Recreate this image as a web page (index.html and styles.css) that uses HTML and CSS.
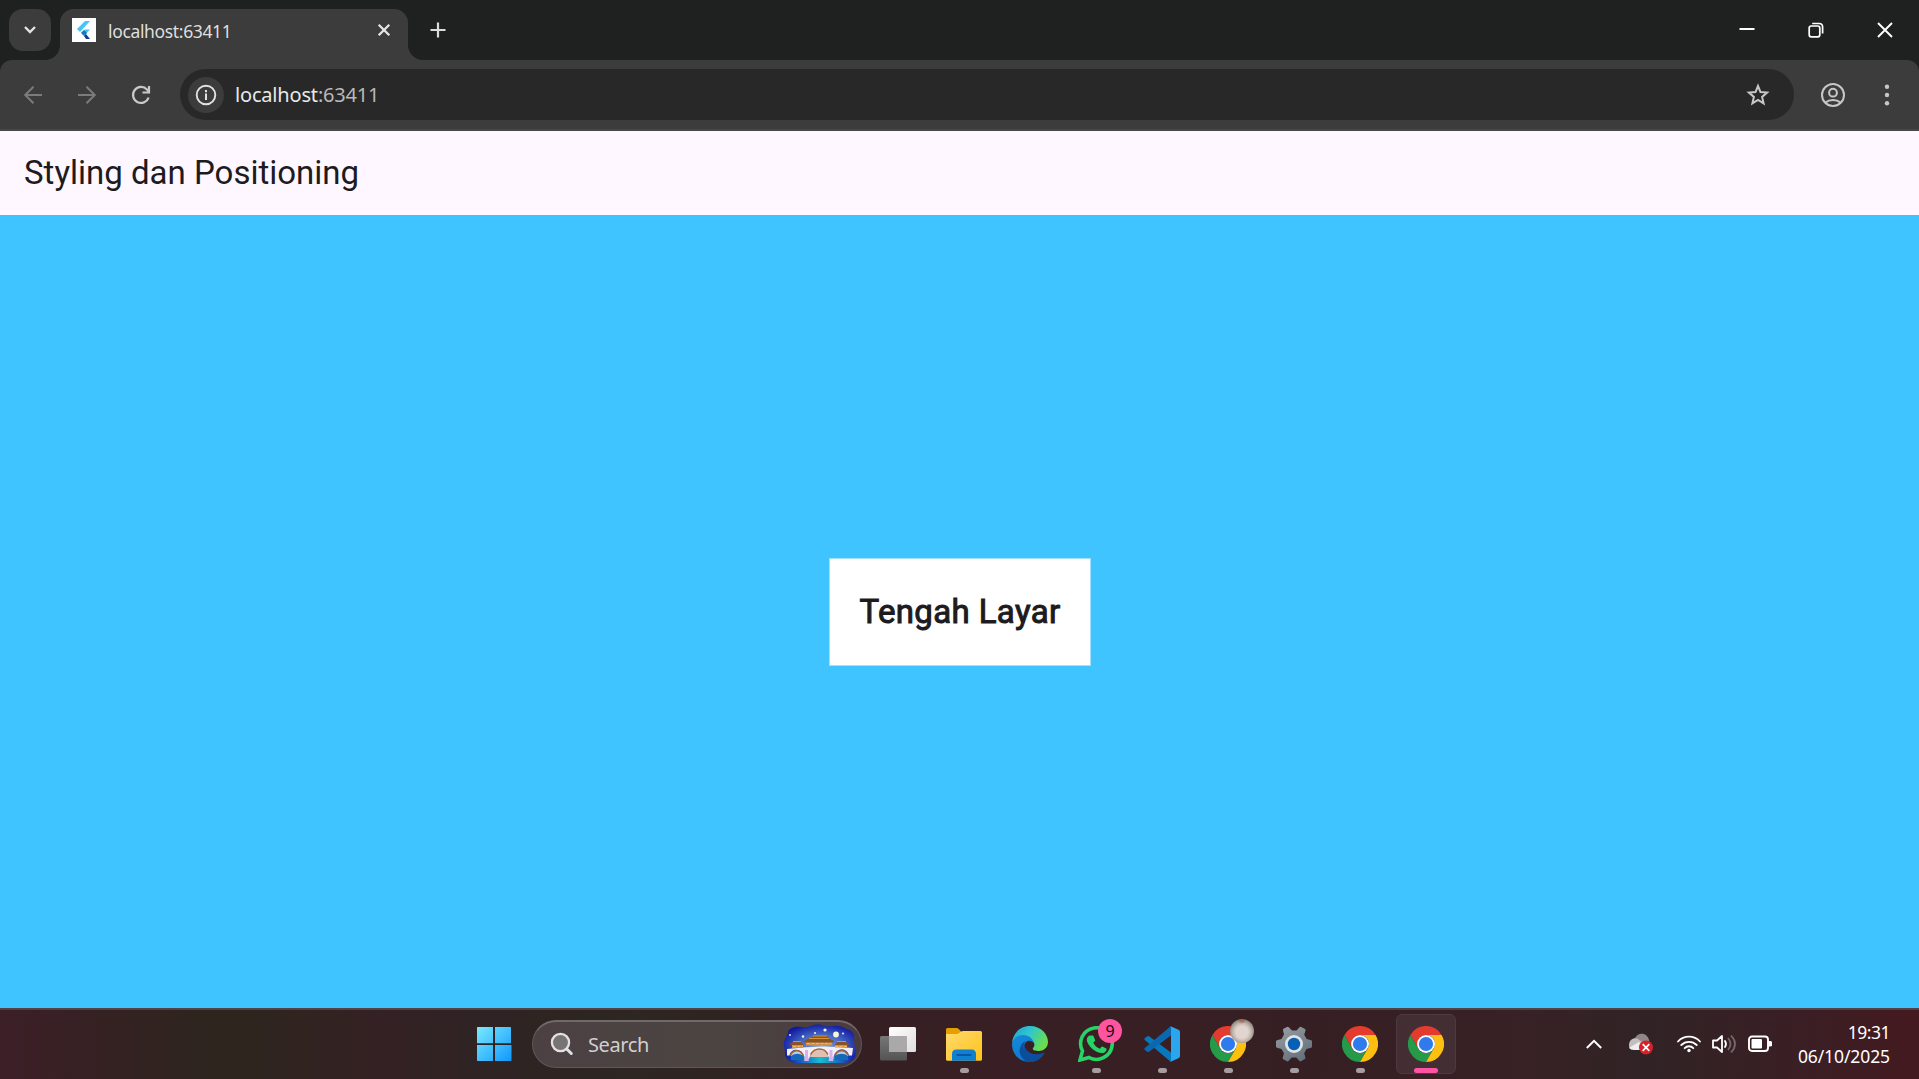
FILE: index.html
```html
<!DOCTYPE html>
<html lang="id">
<head>
<meta charset="utf-8">
<title>localhost:63411</title>
<link rel="stylesheet" href="styles.css">
</head>
<body>
<svg class="defs" width="0" height="0" aria-hidden="true">
  <symbol id="chrome" viewBox="0 0 36 36">
    <path fill="#e33b2e" d="M18 9H33.6A18 18 0 0 0 2.4 9L10.2 22.5A9 9 0 0 1 18 9z"/>
    <path fill="#259a49" d="M2.4 9A18 18 0 0 0 18 36L25.8 22.5A9 9 0 0 1 10.2 22.5z"/>
    <path fill="#fdc010" d="M33.6 9A18 18 0 0 1 18 36L25.8 22.5A9 9 0 0 0 18 9z"/>
    <circle cx="18" cy="18" r="9" fill="#fff"/><circle cx="18" cy="18" r="7.1" fill="#2f7bee"/>
  </symbol>
</svg>

<header class="tabstrip">
  <button class="tab-search"><svg width="14" height="10" viewBox="0 0 14 10"><path d="M2 2l5 5 5-5" fill="none" stroke="#e3e3e3" stroke-width="2.4"/></svg></button>
  <div class="tab">
    <svg class="favicon" width="24" height="24" viewBox="0 0 24 24"><path fill="#fff" d="M0 0h24v24H0z"/><path fill="#43c5f5" d="M13 3h5L8 14l-3-3z"/><path fill="#43c5f5" d="M13 11.500h5L13 17l-4-2.500z"/><path fill="#1c76c8" d="M9 15l3-3 3 3-3 3z"/><path fill="#113d91" d="M12 18l2-2 4 5h-4z"/></svg>
    <span class="tab-title">localhost:63411</span>
    <svg class="tab-close" width="14" height="14" viewBox="0 0 14 14"><path d="M1.700 1.700l10.600 10.600M12.300 1.700L1.700 12.300" stroke="#e6e6e6" stroke-width="2.300"/></svg>
  </div>
  <svg class="new-tab" width="16" height="16" viewBox="0 0 16 16"><path d="M8 .5v15M.5 8h15" stroke="#dcdcdc" stroke-width="2.200"/></svg>
  <div class="window-controls">
    <span><svg width="16" height="16" viewBox="0 0 16 16"><path d="M.5 7h15" stroke="#fff" stroke-width="2"/></svg></span>
    <span><svg width="16" height="16" viewBox="0 0 16 16" fill="none" stroke="#fff" stroke-width="1.700"><rect x="1.200" y="4" width="10.600" height="10.800" rx="2"/><path d="M4.200 1.500h7a3.500 3.500 0 0 1 3.400 3.500v6.500"/></svg></span>
    <span><svg width="16" height="16" viewBox="0 0 16 16"><path d="M1 1l14 14M15 1L1 15" stroke="#fff" stroke-width="1.900"/></svg></span>
  </div>
</header>

<nav class="toolbar">
  <div class="nav-buttons">
    <svg width="20" height="20" viewBox="0 0 20 20" fill="none" stroke="#7b7b7b" stroke-width="2"><path d="M19 10H2.500M10.500 1.700L2.200 10l8.300 8.300"/></svg>
    <svg width="20" height="20" viewBox="0 0 20 20" fill="none" stroke="#7b7b7b" stroke-width="2"><path d="M1 10h16.500M9.500 1.700l8.300 8.300-8.300 8.300"/></svg>
    <svg width="20" height="20" viewBox="0 0 20 20" fill="none" stroke="#c9c9c9" stroke-width="2.200"><path d="M17.600 12.500A8 8 0 1 1 16 4.600l2 2"/><path d="M18 1v6.500h-6.500"/></svg>
  </div>
  <div class="omnibox">
    <div class="site-info"><svg width="22" height="22" viewBox="0 0 22 22"><circle cx="11" cy="11" r="9.300" fill="none" stroke="#e2e2e2" stroke-width="1.900"/><path d="M11 9.500v6.500M11 6v2.200" stroke="#e2e2e2" stroke-width="2"/></svg></div>
    <span class="url">localhost<span class="port">:63411</span></span>
    <svg class="star" width="24" height="24" viewBox="0 0 24 24"><path d="M12 3l2.500 6.100 6.600.5-5 4.300 1.500 6.400-5.600-3.400-5.600 3.400 1.500-6.400-5-4.300 6.600-.5z" fill="none" stroke="#c7c7c7" stroke-width="2"/></svg>
  </div>
  <svg class="profile" width="24" height="24" viewBox="0 0 24 24" fill="none" stroke="#c7c7c7" stroke-width="2"><circle cx="12" cy="12" r="11"/><circle cx="12" cy="9.700" r="3.900"/><path d="M4.500 19.600c4-3.400 11-3.400 15 0"/></svg>
  <svg class="menu" width="6" height="22" viewBox="0 0 6 22" fill="#c7c7c7"><circle cx="3" cy="2.700" r="2.200"/><circle cx="3" cy="11" r="2.200"/><circle cx="3" cy="19.300" r="2.200"/></svg>
</nav>

<main class="app">
  <h1 class="app-bar">Styling dan Positioning</h1>
  <section class="app-body"><div class="card">Tengah Layar</div></section>
</main>

<footer class="taskbar">
  <div class="apps">
    <div class="slot"><svg width="36" height="36" viewBox="0 0 36 36"><defs><linearGradient id="win" gradientUnits="userSpaceOnUse" x1="0" y1="0" x2="36" y2="36"><stop stop-color="#7bebff"/><stop offset="1" stop-color="#0c95fa"/></linearGradient></defs><path fill="url(#win)" d="M.5 1H16v16.300H0V1.500zM18 1h15.500l.5.500v15.800H18zM0 19h16v16H.5l-.5-.5zM18 19h16.500v15.500l-.5.500H18z"/></svg></div>
    <div class="search">
      <svg class="lens" width="24" height="24" viewBox="0 0 24 24" fill="none" stroke="#e4e1e6" stroke-width="2.300"><path d="M16.800 17l4.500 4.500" stroke-width="3" stroke-linecap="round"/><circle cx="10.500" cy="10.500" r="8.600" fill="#797474"/></svg>
      <span class="search-label">Search</span>
      <svg class="highlight" width="73" height="40" viewBox="0 0 73 40">
        <defs>
          <radialGradient id="sky" cx=".52" cy=".55" r=".58"><stop stop-color="#8fa6dc"/><stop offset=".5" stop-color="#4468c4"/><stop offset="1" stop-color="#1018a0"/></radialGradient>
          <linearGradient id="water" x2="1"><stop stop-color="#1020a8"/><stop offset=".25" stop-color="#1468c8"/><stop offset=".5" stop-color="#14bfd0"/><stop offset=".75" stop-color="#1478c8"/><stop offset="1" stop-color="#1421ac"/></linearGradient>
        </defs>
        <path fill="url(#sky)" d="M5 8c1-5 9-6 14-5 6 1 7-1 12-2s8 0 11 1 8-1 14 0 6 3 10 4 6 5 5 10 3 8 2 14c-1 7-8 9-15 9H17C8 39 2 36 2 29c0-4-2-7-1-11S4 13 5 8z"/>
        <path fill="url(#water)" d="M2.500 31h69c-1 6-6 8-13.500 8H17c-8 0-13-2-14.500-8z"/>
        <path fill="#f4eef8" d="M4 25q32-4.500 66-1l-1 7.500h-3C64 23 53 23 50.500 33v2h-4C43 23 29 23 26 35h-4.500v-2C19 24 8 23 6.500 31.500H4z"/>
        <path fill="#c0cdea" d="M7.500 32C10 25 18 25 20 33zM52 33c2-8 11-8 13.500-1z"/>
        <path fill="#e0c0b4" d="M27 33c4-10 15-10 18.500 0z"/>
        <path fill="none" stroke="#a5682b" stroke-width="1.500" d="M7.500 31c3-6 11-6 13 1.500M27.500 30.500c4-7.500 14-7.500 17.500 0M52 32.500c2-7.500 10-7.500 13-1.500"/>
        <path fill="#1769b8" d="M8 32c4-3 9-3 12 0v4H8zM52 32c4-3 9-3 13 0v4H52z"/>
        <path fill="#d8b0ee" d="M22 26h3v6l1 5h-5l1-5zM46.500 26h3v6l1 5h-5l1-5z"/>
        <path fill="#cd9448" d="M9 20h11v4H9zM52 20h12v3.500H52zM23 17h26v4.500H23z"/>
        <path fill="#8a5227" d="M21 17l5-3h20l5 3v1.500H21zM6.500 21l4-3.500h7l3 3.500zM51.500 21l3-3.500h8l4 3.500zM28 14l2.500-2.500h13L46 14z"/>
        <path stroke="#f4b760" d="M24 19.500h24M10 22.500h10M52 22.500h12" stroke-dasharray="3 1.500"/>
        <path stroke="#d99139" stroke-width="1.200" d="M30 12h14M10 17.500h8M54 17.500h9M26 14.500h20"/>
        <g fill="#f7f7df"><circle cx="53" cy="10.500" r="2.900"/><circle cx="42" cy="6" r="1.600"/><circle cx="20" cy="12.500" r="1.200"/><circle cx="32" cy="9" r="1"/><circle cx="7" cy="11" r=".9"/><circle cx="60" cy="9.500" r="1"/></g>
      </svg>
    </div>
    <div class="slot"><svg width="36" height="36" viewBox="0 0 36 36"><defs><linearGradient id="front" x2="1" y2="1"><stop stop-color="#fff"/><stop offset="1" stop-color="#dedede"/></linearGradient><linearGradient id="back" x2="0" y2="1"><stop stop-color="#777"/><stop offset="1" stop-color="#545454"/></linearGradient></defs><rect y="10" width="27" height="24.500" rx="1.500" fill="url(#back)"/><rect x="9" y="1" width="27" height="25" rx="1.500" fill="url(#front)"/><path fill="#aaa8a9" d="M9 10h18v16H10l-1-1z"/></svg></div>
    <div class="slot running"><svg width="36" height="36" viewBox="0 0 36 36"><defs><linearGradient id="folder" x2="1" y2="1"><stop stop-color="#ffda6e"/><stop offset="1" stop-color="#ffc219"/></linearGradient></defs><path fill="#e5a000" d="M0 3.500Q0 2 1.500 2H10q2 0 3 1.200L15 5.500V12H0z"/><path fill="url(#folder)" d="M0 8h10.500q1.500 0 3-1.300T17 5h17.500Q36 5 36 6.500v27q0 1.200-1.500 1.200h-33Q0 34.700 0 33.500z"/><path fill="#0f7fd1" d="M6 34.700V28q0-4.500 4.500-4.500h15q4.500 0 4.500 4.500v6.700z"/><path stroke="#0856a5" stroke-width="2" stroke-linecap="round" d="M11.500 29h13"/></svg></div>
    <div class="slot"><svg width="36" height="36" viewBox="0 0 36 36"><defs><linearGradient id="edgeTop" x2="1" y2=".45"><stop stop-color="#219fd9"/><stop offset=".5" stop-color="#2ec6cf"/><stop offset="1" stop-color="#68de4e"/></linearGradient><linearGradient id="edgeSide" x2=".6" y2="1"><stop stop-color="#1689d8"/><stop offset="1" stop-color="#087bd3"/></linearGradient></defs><path fill="url(#edgeTop)" d="M0 17C1 7 8 0 18 0c11 0 18 8 18 16 0 6-5 9-9 9-4 0-7-1-6-3 3-3 1-7-3-8C12 10 4 11 0 17z"/><path fill="url(#edgeSide)" d="M0 18C1 12 6 9 11 9c6 0 10 4 11 8-4-4-9-2-10 3-1 7 5 13 11 15-3 1-6 1-9 .5C5 34 0 26 0 18z"/><path fill="#0d4e9c" d="M14 15c-4 4-3 10 1 14 5 4 12 4 17-1-4 6-9 8-14 8-7 0-12-8-10-14 1-4 3-6 6-7z"/><path fill="#0d4e9c" d="M12.500 18c0 8 9 13 20.500 8.500-3 5-7 8-12 9-8-2-12-12-8.500-17.500z"/></svg></div>
    <div class="slot running"><svg width="36" height="36" viewBox="0 0 36 36"><path d="M2 34l2.500-9A15.800 15.800 0 1 1 11 31.500z" fill="none" stroke="#25d366" stroke-width="3.600"/><path fill="#25d366" d="M12.400 9.500h2.100c.7 0 1 .4 1.300 1.200l1.200 3c.3.800-.2 1.400-1.700 3 1.500 3 3.600 4.800 6.700 6 1.600-2 1.900-2.500 2.800-2l3.500 1.700c.7.400 0 4.600-4.300 4.700C17.500 27.300 8.800 19 8.800 13.700c0-2 1.500-4.200 3.600-4.200z"/></svg><span class="badge">9</span></div>
    <div class="slot running"><svg width="36" height="36" viewBox="0 0 36 36"><path fill="#0878bd" d="M1 12l2-1.600q1.300-.8 2.400.1L27 26.500V36L.8 14q-1-1 .2-2z"/><path fill="#0b68af" d="M1 24l2 1.700q1.300.8 2.400-.1L27 9.500V0L.8 22q-1 1 .2 2z"/><path fill="#2ca5ef" d="M26 0l8.500 3.800Q36 4.500 36 6v24q0 1.500-1.500 2.200L26 36q1-.5 1-2V2q0-1.500-1-2z"/></svg></div>
    <div class="slot running"><svg width="36" height="36"><use href="#chrome"/></svg><span class="avatar"></span></div>
    <div class="slot running"><svg width="36" height="36" viewBox="0 0 36 36"><defs><linearGradient id="gear" gradientUnits="userSpaceOnUse" x1="8" y1="2" x2="28" y2="36"><stop stop-color="#949a9f"/><stop offset="1" stop-color="#606d79"/></linearGradient></defs><path fill="url(#gear)" d="M0 15.500Q0 14.500 1 14.300L5.500 13 8 8.600 7 4.200Q6.700 3.200 7.500 2.700L11 1Q12 .5 12.800 1.300L16 4.500h4.500l3-3.300Q24.300.4 25.200.9L29 3Q29.800 3.600 29.500 4.500L28.200 8.800l2.500 4.300 4.500 1.200q.8.200.8 1.200v5q0 1-.8 1.200L30.500 23 28.200 27.200l1.200 4.500q.3.900-.6 1.400L25 35.200q-.8.500-1.500-.3L20.300 31.500h-4.600l-3.200 3.400q-.7.800-1.500.3L7.300 33.200q-.8-.5-.6-1.500L8 27.300 5.500 23 .9 21.700Q0 21.500 0 20.500z"/><circle cx="18" cy="18" r="9" fill="#e0e3e5"/><circle cx="18" cy="18" r="6.200" fill="#0860b4"/></svg></div>
    <div class="slot running"><svg width="36" height="36"><use href="#chrome"/></svg></div>
    <div class="slot running active"><svg width="36" height="36"><use href="#chrome"/></svg></div>
  </div>
  <div class="tray">
    <svg class="chevron" width="16" height="10" viewBox="0 0 16 10"><path d="M.8 9L8 1.800 15.200 9" fill="none" stroke="#fff" stroke-width="2"/></svg>
    <svg class="cloud" width="26" height="22" viewBox="0 0 26 22"><path fill="#8f8789" d="M7 5c3-6 12-6 14 2l1 5-12 3z"/><path fill="#c5bec0" d="M1 12c0-5 5-8 9-6l7 5-6 5H2q-1-1-1-4z"/><path fill="#eee" d="M1.500 14.500L11 9l6 8H6q-4 0-4.500-2.500z"/><circle cx="18" cy="14.500" r="7" fill="#d91f2a"/><path d="M14.700 11.200l6.600 6.600m0-6.600l-6.600 6.600" stroke="#fff" stroke-width="1.700"/></svg>
    <svg class="wifi" width="24" height="18" viewBox="0 0 24 18" fill="none" stroke="#fff" stroke-width="1.800" stroke-linecap="round"><path d="M1 6.500C7 .1 17 .1 23 6.500M4.300 10C8.500 5.700 15.500 5.700 19.700 10M7.700 13.200c2.300-2.600 6.300-2.600 8.600 0"/><circle cx="12" cy="15.500" r="1.700" fill="#fff" stroke="none"/></svg>
    <svg class="volume" width="25" height="20" viewBox="0 0 25 20" fill="none" stroke="#fff" stroke-width="1.800"><path stroke-linejoin="round" d="M1 6.500h4L10 2v16l-5-4.500H1z"/><path d="M13 7q2 3 0 6" stroke-linecap="round"/><path stroke="#75676a" d="M16 4q5 6 0 12M19 1.500q8 8.500 0 17"/></svg>
    <svg width="24" height="18" viewBox="0 0 24 18"><rect x="1" y="1.500" width="19" height="14.500" rx="3" fill="none" stroke="#fff" stroke-width="1.900"/><rect x="3.500" y="4" width="10.500" height="9.500" rx="1" fill="#fff"/><path fill="#fff" d="M20 6h2q2 0 2 1.300v2.900q0 1.300-2 1.300h-2z"/></svg>
    <div class="clock"><span>19:31</span><span class="date">06/10/2025</span></div>
  </div>
</footer>
</body>
</html>
```

FILE: styles.css
```css
* { box-sizing: border-box; }
body {
  margin: 0;
  width: 1919px;
  height: 1079px;
  overflow: hidden;
  display: flex;
  flex-direction: column;
  background: #1f2120;
  font-family: "Noto Sans", "Open Sans", sans-serif;
}
svg { display: block; flex: none; }
.defs { position: absolute; }

/* Tabs */
.tabstrip { height: 60px; flex: none; display: flex; align-items: flex-start; padding: 9px 0 0 9px; }
.tab-search {
  width: 42px; height: 42px; padding: 0; border: 0; border-radius: 14px;
  background: #3c3c3c; display: flex; align-items: center; justify-content: center;
}
.tab {
  position: relative; display: flex; align-items: flex-start;
  width: 348px; height: 51px; margin-left: 9px; padding: 9px 17px 0 12px;
  border-radius: 14px 14px 0 0; background: #3c3c3c;
}
.tab::before, .tab::after { content: ""; position: absolute; bottom: 0; width: 15px; height: 15px; }
.tab::before { left: -15px; background: radial-gradient(circle at 0 0, transparent 14.500px, #3c3c3c 15.500px); }
.tab::after { right: -15px; background: radial-gradient(circle at 100% 0, transparent 14.500px, #3c3c3c 15.500px); }
.tab-title { margin-left: 12px; line-height: 26px; font-size: 17.500px; letter-spacing: -.35px; color: #dfdfdf; white-space: nowrap; }
.tab-close { margin: 5px 0 0 auto; }
.new-tab { margin: 13px 0 0 22px; }
.window-controls { margin-left: auto; display: flex; }
.window-controls span { width: 69px; height: 42px; display: flex; justify-content: center; align-items: center; }

/* Toolbar */
.toolbar {
  height: 71px; flex: none; display: flex; align-items: center; padding: 0 29px 0 23px;
  background: #3c3c3c; border-bottom: 2px solid #474747; border-radius: 12px 12px 0 0;
}
.nav-buttons { display: flex; gap: 34px; width: 157px; }
.omnibox { width: 1614px; height: 51px; border-radius: 26px; background: #282828; display: flex; align-items: center; padding: 0 24px 0 8px; }
.site-info { width: 36px; height: 36px; border-radius: 50%; background: #3c3c3c; display: flex; align-items: center; justify-content: center; }
.url { margin-left: 11px; font-size: 20px; letter-spacing: -.18px; color: #e8e8e8; white-space: nowrap; }
.port { color: #b9b9b9; }
.star { margin-left: auto; }
.profile { margin-left: 27px; }
.menu { margin-left: auto; }

/* Page */
.app { flex: 1; display: flex; flex-direction: column; font-family: Roboto, sans-serif; color: #1d1b20; }
.app-bar { height: 84px; margin: 0; padding: 0 24px; line-height: 84px; font-size: 33px; font-weight: 400; background: #fef7ff; }
.app-body { flex: 1; display: flex; align-items: center; justify-content: center; padding: 1px 0 0 1px; background: #40c4ff; }
.card {
  width: 262px; height: 108px; border: 1px solid #a3e2ff; text-align: center;
  background: #fff; font-size: 33px; line-height: 105px; letter-spacing: .375px;
  -webkit-text-stroke: 1px #1d1b20; white-space: nowrap;
}

/* Taskbar */
.taskbar {
  height: 71px; flex: none; display: flex; justify-content: space-between;
  padding: 0 29px 2px 465px; border-top: 2px solid #514247;
  background: linear-gradient(90deg, #3c1f27 0, #362123 90px, #2e251f 200px, #2e251f 260px, #352123 370px, #2f2323 470px, #2d2622 640px, #341f22 850px, #391f25 1000px, #361f23 1300px, #382124 1500px, #312325 1650px, #3a1f24 1800px, #441a20 1919px);
}
.apps { display: flex; align-items: center; gap: 6px; }
.slot { position: relative; width: 60px; height: 60px; display: flex; align-items: center; justify-content: center; border-radius: 6px; }
.running::after { content: ""; position: absolute; left: 26px; bottom: 1px; width: 9px; height: 5px; border-radius: 3px; background: #a79da0; }
.active { background: #432e34; border: 1px solid #4c3a40; }
.active::after { left: 17px; bottom: 0; width: 24px; background: #ff54a4; }
.badge, .avatar { position: absolute; left: 32px; top: 5px; width: 24px; height: 24px; border-radius: 50%; }
.badge { background: #ff549f; color: #1a090f; font-size: 16px; line-height: 24px; text-align: center; }
.avatar { background: radial-gradient(circle at 50% 0, #9d6c5c 0 2px, transparent 5px), radial-gradient(circle at 50% 55%, #e2d5cf 0 6px, #c5b8b1 9px, #858278 13px); }
.search {
  width: 330px; height: 48px; margin-left: 1px; padding: 0 5px 0 17px; display: flex; align-items: center;
  border: 1px solid #61575a; border-top: 2px solid #70686a; border-radius: 24px;
  background: linear-gradient(90deg, #4c4043, #4b4541 55%, #4b3b3e);
}
.search-label { margin-left: 14px; font-size: 20px; letter-spacing: -.4px; color: #d3cfcf; }
.highlight { margin-left: auto; }
.tray { display: flex; align-items: center; color: #fff; }
.cloud { margin-left: 26px; }
.wifi { margin-left: 23px; }
.volume { margin: 0 11px; }
.clock { width: 118px; display: flex; flex-direction: column; align-items: flex-end; font-size: 17.500px; line-height: 24px; letter-spacing: -.5px; white-space: nowrap; }
.date { letter-spacing: -.1px; }
```
